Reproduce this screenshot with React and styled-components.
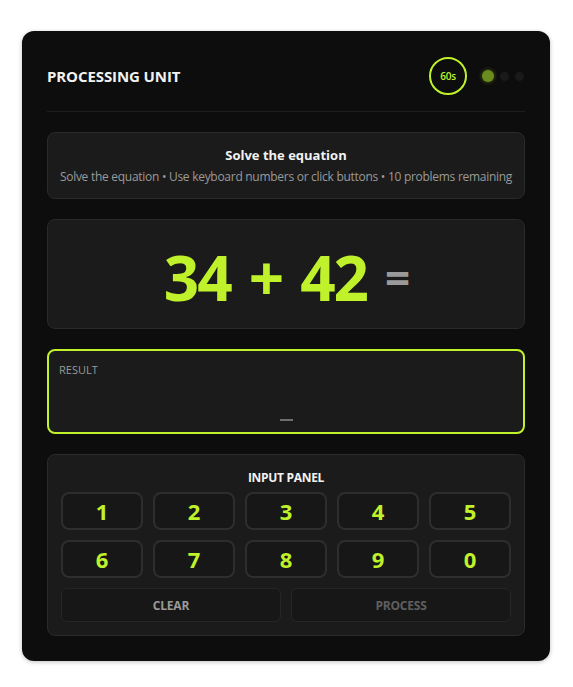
import styled, { createGlobalStyle } from 'styled-components';

const lime = '#bff22a';

const GlobalStyle = createGlobalStyle`
  html, body {
    margin: 0;
    padding: 0;
    background: #ffffff;
  }
  body {
    font-family: 'Open Sans', 'Noto Sans', sans-serif;
  }
`;

const Page = styled.div`
  padding: 31px 23px 26px 22px;
`;

const Card = styled.div`
  width: 528px;
  box-sizing: border-box;
  background: #0d0d0d;
  border-radius: 12px;
  padding: 0 25px 25px;
  box-shadow: 0 1px 4px rgba(0, 0, 0, 0.25);
`;

const Header = styled.header`
  display: flex;
  align-items: center;
  justify-content: space-between;
  padding: 26px 0 16px;
  border-bottom: 1px solid #1e1e1e;
  margin-bottom: 20px;
`;

const Title = styled.h1`
  margin: 0;
  font-size: 15px;
  font-weight: 700;
  color: #f2f2f2;
  letter-spacing: -0.1px;
`;

const Status = styled.div`
  display: flex;
  align-items: center;
  gap: 6px;
  margin-right: 1px;
`;

const Timer = styled.div`
  width: 34px;
  height: 34px;
  border: 2px solid ${lime};
  border-radius: 50%;
  display: flex;
  align-items: center;
  justify-content: center;
  font-size: 10px;
  font-weight: 600;
  letter-spacing: -0.3px;
  color: ${lime};
  margin-right: 9px;
`;

const Dot = styled.span`
  width: ${({ active }) => (active ? '12px' : '9px')};
  height: ${({ active }) => (active ? '12px' : '9px')};
  border-radius: 50%;
  background: ${({ active }) => (active ? '#6b8c1c' : '#1a1a1a')};
  box-shadow: ${({ active }) => (active ? '0 0 4px rgba(140, 190, 30, 0.5)' : 'none')};
`;

const Stack = styled.div`
  display: flex;
  flex-direction: column;
  gap: 20px;
`;

const Panel = styled.section`
  background: #1b1b1b;
  border: 1px solid #2a2a2a;
  border-radius: 8px;
`;

const Instructions = styled(Panel)`
  height: 67px;
  box-sizing: border-box;
  display: flex;
  flex-direction: column;
  align-items: center;
  justify-content: center;
  gap: 4px;
`;

const InstrTitle = styled.div`
  font-size: 13px;
  font-weight: 700;
  color: #f2f2f2;
`;

const InstrText = styled.div`
  font-size: 12px;
  color: #9a9a9a;
  letter-spacing: -0.28px;
`;

const Equation = styled(Panel)`
  height: 110px;
  box-sizing: border-box;
  display: flex;
  align-items: center;
  justify-content: center;
  gap: 18px;
  font-size: 62px;
  font-weight: 700;
  line-height: 1;
  padding-top: 6px;
  letter-spacing: -2px;
`;

const Term = styled.span`
  color: ${({ muted }) => (muted ? '#9a9a9a' : lime)};
  font-size: ${({ small }) => (small ? '44px' : 'inherit')};
`;

const Result = styled.div`
  height: 85px;
  box-sizing: border-box;
  background: #1b1b1b;
  border: 2px solid ${lime};
  border-radius: 8px;
  padding: 11px 10px 0;
  display: flex;
  flex-direction: column;
`;

const ResultLabel = styled.div`
  font-size: 11px;
  color: #9a9a9a;
  font-weight: 500;
`;

const Cursor = styled.div`
  align-self: center;
  margin-top: 42px;
  width: 13px;
  height: 2px;
  background: #6e6e6e;
`;

const Keypad = styled(Panel)`
  padding: 14px 13px 13px;
  display: flex;
  flex-direction: column;
  gap: 10px;
`;

const KeypadTitle = styled.div`
  text-align: center;
  font-size: 12px;
  font-weight: 700;
  color: #f2f2f2;
  letter-spacing: -0.3px;
  line-height: 17px;
  margin-bottom: -4px;
`;

const KeyGrid = styled.div`
  display: grid;
  grid-template-columns: repeat(5, 1fr);
  gap: 10px;
`;

const Key = styled.button`
  height: 38px;
  background: #171717;
  border: 2px solid #2e2e2e;
  border-radius: 8px;
  color: ${lime};
  font-family: inherit;
  font-size: 22px;
  font-weight: 700;
  padding: 0;
  cursor: pointer;
`;

const Actions = styled.div`
  display: grid;
  grid-template-columns: 1fr 1fr;
  gap: 10px;
`;

const Action = styled.button`
  height: 34px;
  background: #171717;
  border: 1px solid #262626;
  border-radius: 6px;
  color: ${({ disabled }) => (disabled ? '#5f5f5f' : '#9a9a9a')};
  font-family: inherit;
  font-size: 12px;
  font-weight: 700;
  letter-spacing: -0.2px;
  padding: 0;
`;

const keys = ['1', '2', '3', '4', '5', '6', '7', '8', '9', '0'];

export default function App() {
  return (
    <>
      <GlobalStyle />
      <Page>
        <Card>
          <Header>
            <Title>PROCESSING UNIT</Title>
            <Status>
              <Timer>60s</Timer>
              <Dot active />
              <Dot />
              <Dot />
            </Status>
          </Header>
          <Stack>
            <Instructions>
              <InstrTitle>Solve the equation</InstrTitle>
              <InstrText>
                Solve the equation • Use keyboard numbers or click buttons • 10 problems remaining
              </InstrText>
            </Instructions>
            <Equation>
              <Term>34</Term>
              <Term>+</Term>
              <Term>42</Term>
              <Term muted small>=</Term>
            </Equation>
            <Result>
              <ResultLabel>RESULT</ResultLabel>
              <Cursor />
            </Result>
            <Keypad>
              <KeypadTitle>INPUT PANEL</KeypadTitle>
              <KeyGrid>
                {keys.map((k) => (
                  <Key key={k}>{k}</Key>
                ))}
              </KeyGrid>
              <Actions>
                <Action>CLEAR</Action>
                <Action disabled>PROCESS</Action>
              </Actions>
            </Keypad>
          </Stack>
        </Card>
      </Page>
    </>
  );
}
